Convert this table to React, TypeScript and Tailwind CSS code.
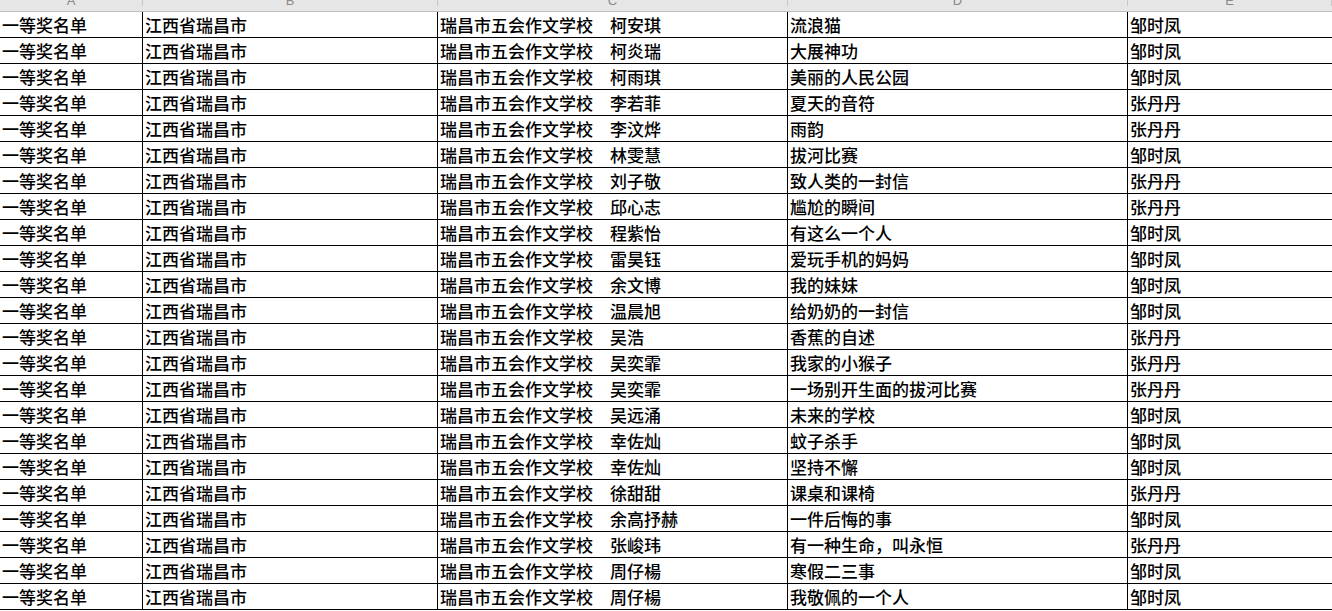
import React from "react";

const rows: [string, string, string][] = [
  ["柯安琪", "流浪猫", "邹时凤"],
  ["柯炎瑞", "大展神功", "邹时凤"],
  ["柯雨琪", "美丽的人民公园", "邹时凤"],
  ["李若菲", "夏天的音符", "张丹丹"],
  ["李汶烨", "雨韵", "张丹丹"],
  ["林雯慧", "拔河比赛", "邹时凤"],
  ["刘子敬", "致人类的一封信", "张丹丹"],
  ["邱心志", "尴尬的瞬间", "张丹丹"],
  ["程紫怡", "有这么一个人", "邹时凤"],
  ["雷昊钰", "爱玩手机的妈妈", "邹时凤"],
  ["余文博", "我的妹妹", "邹时凤"],
  ["温晨旭", "给奶奶的一封信", "邹时凤"],
  ["吴浩", "香蕉的自述", "张丹丹"],
  ["吴奕霏", "我家的小猴子", "张丹丹"],
  ["吴奕霏", "一场别开生面的拔河比赛", "张丹丹"],
  ["吴远涌", "未来的学校", "邹时凤"],
  ["幸佐灿", "蚊子杀手", "邹时凤"],
  ["幸佐灿", "坚持不懈", "邹时凤"],
  ["徐甜甜", "课桌和课椅", "张丹丹"],
  ["余高抒赫", "一件后悔的事", "邹时凤"],
  ["张峻玮", "有一种生命，叫永恒", "张丹丹"],
  ["周仔楊", "寒假二三事", "邹时凤"],
  ["周仔楊", "我敬佩的一个人", "邹时凤"],
];

const cell =
  "h-[26px] border-r border-b border-black flex items-center pl-[2px] whitespace-nowrap overflow-hidden";

export default function App() {
  return (
    <div
      className="w-[1332px] h-[611px] bg-white overflow-hidden text-black"
      style={{ fontFamily: '"Noto Sans CJK SC", "Noto Sans", sans-serif' }}
    >
      <div className="grid grid-cols-[143px_295px_350px_340px_1fr] h-[12px] bg-[#e6e6e6] border-b border-[#bfbfbf] overflow-hidden">
        {["A", "B", "C", "D", "E"].map((l) => (
          <div
            key={l}
            className="border-r border-[#c8c8c8] h-[11px] overflow-hidden text-center text-[13px] leading-[12px] mt-[-5px] text-[#8a8a8a]"
            style={{ fontFamily: '"Liberation Sans", sans-serif' }}
          >
            {l}
          </div>
        ))}
      </div>
      <div className="grid grid-cols-[143px_295px_350px_340px_1fr] text-[17px] font-medium">
        {rows.map((r, i) => (
          <React.Fragment key={i}>
            <div className={cell + " pl-0"}>一等奖名单</div>
            <div className={cell}>江西省瑞昌市</div>
            <div className={cell}>瑞昌市五会作文学校{"\u3000"}{r[0]}</div>
            <div className={cell}>{r[1]}</div>
            <div className={cell + " border-r-0"}>{r[2]}</div>
          </React.Fragment>
        ))}
      </div>
    </div>
  );
}
